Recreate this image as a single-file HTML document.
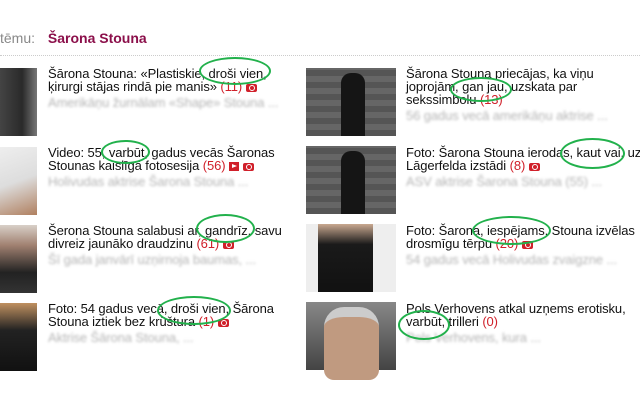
<!DOCTYPE html>
<html><head><meta charset="utf-8"><style>
body{margin:0;width:640px;height:400px;background:#fff;font-family:"Liberation Sans",Arial,sans-serif;position:relative;overflow:hidden}
.hd{position:absolute;top:30px;left:0;font-size:14px;color:#888}
.hd b{color:#8b0f4a;margin-left:9px}
.line{position:absolute;left:0;top:55px;width:640px;border-top:1px dotted #ccc}
.img{position:absolute;height:68px}
.t{position:absolute;font-size:13px;line-height:13px;color:#111;width:236px;letter-spacing:-0.1px}
.t .c{color:#d0202a}
.cam{display:inline-block;width:11px;height:8px;background:#d0202a;border-radius:2px;vertical-align:-1px;position:relative}
.cam:after{content:"";position:absolute;left:3px;top:1px;width:4px;height:4px;border:1px solid #fff;border-radius:50%}
.vid{display:inline-block;width:10px;height:9px;background:#d0202a;vertical-align:-1px;position:relative}
.vid:after{content:"";position:absolute;left:3px;top:2px;border-left:5px solid #fff;border-top:2.5px solid transparent;border-bottom:2.5px solid transparent}
.l{display:block;color:#b5b5b5;filter:blur(1.3px);margin-top:3px}
.e{position:absolute;border:2px solid #22b14c;border-radius:50%}
</style></head><body>
<div class="hd">tēmu: <b>Šarona Stouna</b></div>
<div class="line"></div>

<div class="img" style="left:0;top:68px;width:37px;background:linear-gradient(90deg,#444,#2a2a2a 60%,#777)"></div>
<div class="img" style="left:0;top:147px;width:37px;background:linear-gradient(160deg,#eee,#ddd 50%,#b08060)"></div>
<div class="img" style="left:0;top:225px;width:37px;background:linear-gradient(180deg,#d8d0c8,#a08070 30%,#222 70%,#333)"></div>
<div class="img" style="left:0;top:303px;width:37px;background:linear-gradient(180deg,#c09060,#222 40%,#111)"></div>

<div class="img" style="left:306px;top:68px;width:90px;background:repeating-linear-gradient(0deg,#555 0 6px,#666 6px 12px);"><div style="position:absolute;left:35px;top:5px;width:24px;height:63px;background:#151515;border-radius:10px 10px 0 0"></div></div>
<div class="img" style="left:306px;top:146px;width:90px;background:repeating-linear-gradient(0deg,#555 0 6px,#666 6px 12px);"><div style="position:absolute;left:35px;top:5px;width:24px;height:63px;background:#151515;border-radius:10px 10px 0 0"></div></div>
<div class="img" style="left:306px;top:224px;width:90px;background:#eee"><div style="position:absolute;left:12px;top:0;width:55px;height:68px;background:linear-gradient(180deg,#c9a890,#1a1a1a 30%,#111)"></div></div>
<div class="img" style="left:306px;top:302px;width:90px;background:linear-gradient(180deg,#888,#444)"><div style="position:absolute;left:18px;top:5px;width:55px;height:63px;background:#c09a80;border-radius:20px 20px 10px 10px;border-top:10px solid #ccc"></div></div>

<div class="t" style="left:48px;top:67px">Šārona Stouna: «Plastiskie, droši vien, ķirurgi stājas rindā pie manis» <span class="c">(11)</span> <span class="cam"></span><span class="l">Amerikāņu žurnālam «Shape» Stouna ...</span></div>
<div class="t" style="left:48px;top:146px">Video: 55, varbūt, gadus vecās Šaronas Stounas kaislīgā fotosesija <span class="c">(56)</span> <span class="vid"></span> <span class="cam"></span><span class="l">Holivudas aktrise Šarona Stouna ...</span></div>
<div class="t" style="left:48px;top:224px">Šerona Stouna salabusi ar, gandrīz, savu divreiz jaunāko draudzinu <span class="c">(61)</span> <span class="cam"></span><span class="l">Šī gada janvārī uzņirnoja baumas, ...</span></div>
<div class="t" style="left:48px;top:302px">Foto: 54 gadus vecā, droši vien, Šārona Stouna iztiek bez krūštura <span class="c">(1)</span> <span class="cam"></span><span class="l">Aktrise Šārona Stouna, ...</span></div>

<div class="t" style="left:406px;top:67px;width:228px">Šārona Stouna priecājas, ka viņu joprojām, gan jau, uzskata par sekssimbolu <span class="c">(13)</span><span class="l">56 gadus vecā amerikāņu aktrise ...</span></div>
<div class="t" style="left:406px;top:146px">Foto: Šarona Stouna ierodas, kaut vai, uz Lāgerfelda izstādi <span class="c">(8)</span> <span class="cam"></span><span class="l">ASV aktrise Šarona Stouna (55) ...</span></div>
<div class="t" style="left:406px;top:224px">Foto: Šarona, iespējams, Stouna izvēlas drosmīgu tērpu <span class="c">(20)</span> <span class="cam"></span><span class="l">54 gadus vecā Holivudas zvaigzne ...</span></div>
<div class="t" style="left:406px;top:302px">Pols Verhovens atkal uzņems erotisku, varbūt, trilleri <span class="c">(0)</span><span class="l">Pols Verhovens, kura ...</span></div>

<div class="e" style="left:199px;top:57px;width:68px;height:24px"></div>
<div class="e" style="left:101px;top:140px;width:45px;height:20px"></div>
<div class="e" style="left:450px;top:77px;width:58px;height:21px"></div>
<div class="e" style="left:560px;top:138px;width:61px;height:27px"></div>
<div class="e" style="left:196px;top:214px;width:55px;height:25px"></div>
<div class="e" style="left:472px;top:216px;width:75px;height:25px"></div>
<div class="e" style="left:157px;top:296px;width:70px;height:25px"></div>
<div class="e" style="left:398px;top:310px;width:48px;height:26px"></div>
</body></html>
